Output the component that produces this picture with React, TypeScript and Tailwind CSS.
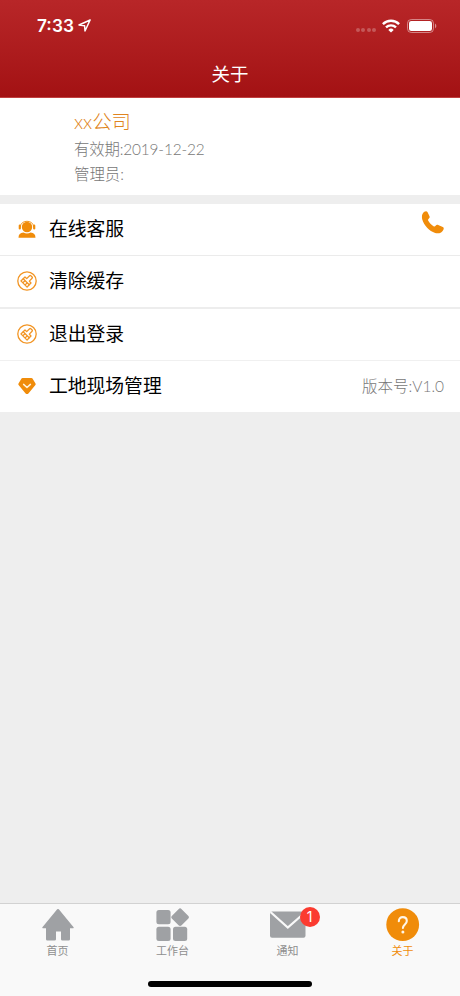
import React from "react";
import clsx from "clsx";

type IconProps = { className?: string };

function LocationIcon() {
  return (
    <svg className="ml-[4px] h-[13px] w-[13px]" viewBox="0 0 13 13" fill="none" stroke="white" strokeWidth="1.5" strokeLinejoin="round">
      <path d="M12.1 1 1 6l5.6.7.4 5.3z" />
    </svg>
  );
}

function WifiIcon() {
  return (
    <svg className="h-[14px] w-[18px]" viewBox="0 0 18 14" fill="none" stroke="white" strokeWidth="2.4">
      <path d="M.9 5.1a11.6 11.6 0 0 1 16.2 0" />
      <path d="M4 8.4a7.2 7.2 0 0 1 10 0" />
      <path d="M9 13.6 6.3 10.9a3.9 3.9 0 0 1 5.4 0z" fill="white" stroke="none" />
    </svg>
  );
}

function BatteryIcon() {
  return (
    <svg className="h-[14px] w-[30px]" viewBox="0 0 30 14">
      <rect x=".5" y=".5" width="26" height="13" rx="3.8" fill="none" stroke="white" strokeOpacity=".45" />
      <rect x="2" y="2" width="23" height="10" rx="2.3" fill="white" />
      <path d="M28 4.6c1.8.8 1.8 4 0 4.8z" fill="white" fillOpacity=".5" />
    </svg>
  );
}

function ServiceIcon({ className }: IconProps) {
  return (
    <svg className={className} viewBox="0 0 20 20" fill="#f08c0a">
      <path d="M3.2 8a6.9 6.9 0 0 1 13.6 0" fill="none" stroke="#f08c0a" strokeWidth=".9" />
      <circle cx="10" cy="8" r="5.2" />
      <rect x="1.7" y="5.6" width="2.2" height="5" rx="1.1" />
      <rect x="16.1" y="5.6" width="2.2" height="5" rx="1.1" />
      <path d="M1.5 18.7c0-3.3 1.7-4.9 4.9-5.2q3.6 2 7.2 0c3.2.3 4.9 1.9 4.9 5.2z" />
    </svg>
  );
}

function BrushIcon({ className }: IconProps) {
  return (
    <svg className={className} viewBox="0 0 20 20" fill="none" stroke="#f29524" strokeWidth="1.3" strokeLinejoin="round">
      <circle cx="10" cy="10" r="9.2" />
      <path d="m8 6 1.7 1.6 2.9-2.9q.6-.5 1.2 0l1.3 1.3q.6.6 0 1.2l-2.8 2.9 1.7 1.9-1.8 1.8-6-6z" />
      <path d="M6.2 7.8 3.9 9.900l6.200 6.200 2.100-2.300M5.800 11.800l2.200-2.100M8 14l2.200-2.100" />
    </svg>
  );
}

function GemIcon({ className }: IconProps) {
  return (
    <svg className={className} viewBox="0 0 20 20">
      <path d="M5.6 2h8.8q.7 0 1.100.6l3 4.800q.5.800-.1 1.600l-7 8.400q-1.400 1.300-2.800 0L1.600 9q-.6-.8-.1-1.600l3-4.800q.4-.6 1.100-.6z" fill="#f08c0a" />
      <path d="m6.600 8.400 3.400 3.100 3.400-3.100" fill="none" stroke="#fff3dd" strokeWidth="1.5" strokeLinecap="round" strokeLinejoin="round" />
    </svg>
  );
}

function PhoneIcon() {
  return (
    <svg className="h-[23px] w-[23px]" viewBox="0 0 23 23" fill="#f08c0a">
      <path d="M3.3.7C4.7-.1 6 0 6.6 1.200l1.900 4.100c.4.900.2 1.500-.6 2.200-.9.800-1.100 1.300-.6 2.300 1.100 2.200 2.900 4.100 5.200 5.400.9.500 1.500.4 2.100-.4.800-1 1.500-1.200 2.600-.8l4.600 2c1 .5 1.200 1.400.6 2.700-1.300 2.900-4.600 4.400-8.300 3.300C8.500 20.200 2.800 14.400 1.200 8.300.5 5.100 1.100 2.100 3.300.7z" />
    </svg>
  );
}

function HomeIcon() {
  return (
    <svg className="h-[34px] w-[34px]" viewBox="0 0 34 34" fill="#9fa1a4">
      <path d="M16.2 1.300q.8-.7 1.600 0L32.600 19.300q.5.900-.5.900H29V31.200q0 1.400-1.400 1.400H21.400q-1.400 0-1.400-1.400V23.500h-5v7.700q0 1.400-1.400 1.400H6.400Q5 32.600 5 31.200V20.200H1.900q-1 0-.5-.9z" />
    </svg>
  );
}

function WorkbenchIcon() {
  return (
    <svg className="h-[34px] w-[34px]" viewBox="0 0 34 34" fill="#9fa1a4">
      <rect x=".4" y="2" width="14.2" height="14.2" rx="2.5" />
      <rect x=".4" y="18.7" width="14.2" height="14.2" rx="2.5" />
      <rect x="17" y="18.7" width="14.2" height="14.2" rx="2.5" />
      <rect x="17.3" y="2.400" width="13.600" height="13.600" rx="2.2" transform="rotate(45 24.1 9.200)" />
    </svg>
  );
}

function MailIcon() {
  return (
    <svg className="h-[34px] w-[36px]" viewBox="0 0 36 34">
      <rect y="3.5" width="35.500" height="26.200" rx="2" fill="#9fa1a4" />
      <path d="m.5 4 17.300 15.500L35.500 4" fill="none" stroke="#f9f9f9" strokeWidth="2.200" />
    </svg>
  );
}

function AboutIcon() {
  return (
    <svg className="h-[34px] w-[34px]" viewBox="0 0 34 34">
      <circle cx="16.7" cy="16.6" r="16.400" fill="#f08c0a" />
      <path d="M12.800 13.300c0-2.600 1.600-4.200 4-4.200s4 1.500 4 3.800c0 3.300-3.900 3.700-3.900 7" fill="none" stroke="#fff6e8" strokeWidth="2.100" strokeLinecap="round" />
      <circle cx="16.900" cy="24" r="1.500" fill="#fff6e8" />
    </svg>
  );
}

const MENU = [
  { label: "在线客服", icon: ServiceIcon, row: "h-[52px] border-b border-[#ebebeb]", phone: true },
  { label: "清除缓存", icon: BrushIcon, row: "h-[53px] border-b-2 border-[#ededed]" },
  { label: "退出登录", icon: BrushIcon, row: "h-[52px] border-b border-[#f0f0f0]" },
  { label: "工地现场管理", icon: GemIcon, row: "h-[51px]", extra: "版本号:V1.0" },
];

const TABS = [
  { label: "首页", icon: HomeIcon },
  { label: "工作台", icon: WorkbenchIcon },
  { label: "通知", icon: MailIcon, badge: 1 },
  { label: "关于", icon: AboutIcon, active: true },
];

export default function App() {
  return (
    <div className="flex h-[996px] w-[460px] flex-col overflow-hidden bg-[#eeeeee] font-['Lato','Noto_Sans_CJK_SC',sans-serif]">
      <header className="flex h-[98px] shrink-0 flex-col border-b border-[#c04040] bg-gradient-to-b from-[#b82628] to-[#a31113] text-white">
        <div className="flex h-[52px] items-center pr-[23px] pl-[37px]">
          <span className="font-['Inter',sans-serif] text-[17.3px] leading-none font-semibold">7:33</span>
          <LocationIcon />
          <div className="ml-auto flex items-center">
            <div className="mt-[8px] mr-[6px] flex gap-[1.5px]">
              {[0, 1, 2, 3].map((i) => (
                <span key={i} className="h-1 w-1 rounded-full bg-white/25" />
              ))}
            </div>
            <WifiIcon />
            <div className="ml-[7px]">
              <BatteryIcon />
            </div>
          </div>
        </div>
        <h1 className="text-center text-[18.5px] leading-[46px] font-normal">关于</h1>
      </header>

      <section className="h-[97px] shrink-0 bg-white pt-[10px] pl-[74px] text-[15.4px] leading-[25px] font-light text-[#777777]">
        <p className="mb-[2px] text-[19.4px] leading-[27px] text-[#e08420]">xx公司</p>
        <p className="tracking-[-0.15px]">有效期:2019-12-22</p>
        <p>管理员:</p>
      </section>

      <ul className="mt-[9px] shrink-0 bg-white">
        {MENU.map(({ label, icon: Icon, row, phone, extra }) => (
          <li key={label} className={clsx("flex items-center pr-4 pl-[17px]", row)}>
            <Icon className="mb-[2px] h-5 w-5" />
            <span className="ml-3 text-[18.8px] leading-none text-black">{label}</span>
            {phone && (
              <span className="mb-[14px] ml-auto">
                <PhoneIcon />
              </span>
            )}
            {extra && <span className="ml-auto text-[15.5px] leading-none font-light text-[#777777]">{extra}</span>}
          </li>
        ))}
      </ul>

      <nav className="mt-auto flex h-[93px] shrink-0 flex-col border-t border-[#d2d2d2] bg-[#f9f9f9]">
        <div className="flex">
          {TABS.map(({ label, icon: Icon, badge, active }) => (
            <div key={label} className={clsx("flex w-[115px] flex-col items-center pt-1", active ? "text-[#f08c0a]" : "text-[#8f8f8f]")}>
              <div className="relative">
                <Icon />
                {badge && (
                  <span className="absolute -top-[1px] -right-[14px] flex h-5 w-5 items-center justify-center rounded-full bg-[#fb3b30] font-['Inter',sans-serif] text-[14px] leading-none text-white">
                    {badge}
                  </span>
                )}
              </div>
              <span className="mt-[3px] text-[11px] leading-[12px]">{label}</span>
            </div>
          ))}
        </div>
        <div className="mx-auto mt-auto mb-[9px] h-[6px] w-[164px] rounded-full bg-black" />
      </nav>
    </div>
  );
}
